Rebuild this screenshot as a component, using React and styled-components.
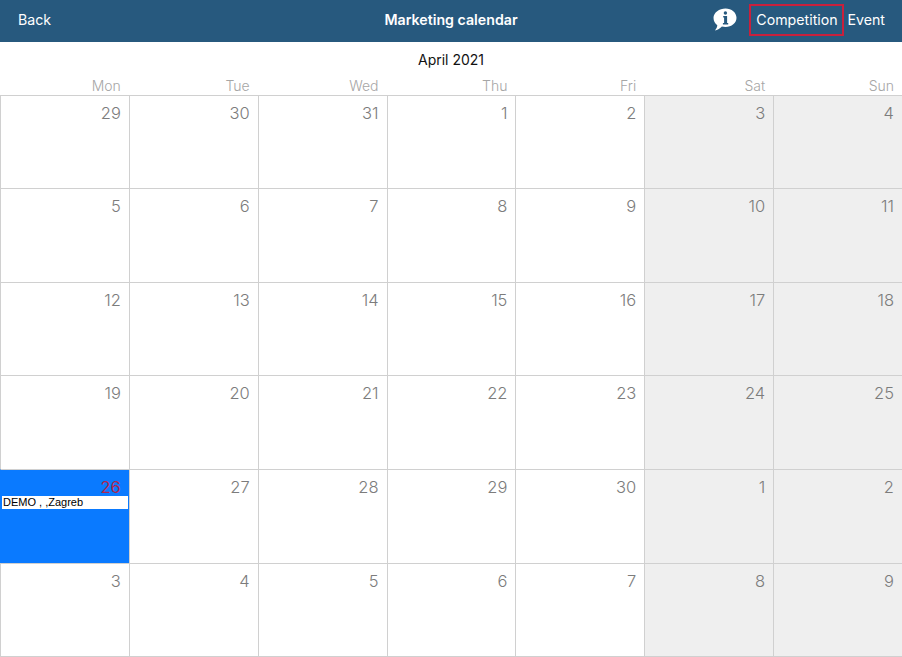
import React from "react";
import styled, { createGlobalStyle } from "styled-components";

const Global = createGlobalStyle`
  html, body { margin: 0; padding: 0; background: #fff; }
  body { font-family: Inter, "Liberation Sans", sans-serif; }
`;
const Page = styled.div`
  width: 902px;
  height: 657px;
  display: flex;
  flex-direction: column;
  overflow: hidden;
`;
const Header = styled.header`
  height: 42px;
  flex: none;
  background: #27597e;
  color: #fff;
  display: grid;
  grid-template-columns: 1fr auto 1fr;
  align-items: center;
  font-size: 14.2px;
  padding-bottom: 3px;
  box-sizing: border-box;
`;
const Back = styled.span`
  padding-left: 18px;
`;
const Title = styled.h1`
  margin: 0;
  font-size: 14.2px;
  font-weight: 600;
`;
const Actions = styled.div`
  display: flex;
  justify-content: flex-end;
  align-items: center;
  padding-right: 17px;
`;
const InfoIcon = styled.svg`
  width: 24px;
  height: 23px;
  margin-right: 12px;
  flex: none;
`;
const HighlightedAction = styled.span`
  box-sizing: border-box;
  width: 95px;
  height: 32px;
  border: 2px solid #c9203c;
  display: flex;
  align-items: center;
  justify-content: center;
  margin-right: 3px;
`;
const Month = styled.div`
  height: 35px;
  flex: none;
  display: flex;
  align-items: center;
  justify-content: center;
  font-size: 14px;
  padding-bottom: 1px;
  box-sizing: border-box;
  color: #111;
`;
const Weekdays = styled.div`
  display: grid;
  grid-template-columns: repeat(7, 1fr);
  height: 17.6px;
  flex: none;
`;
const Weekday = styled.div`
  text-align: right;
  padding-right: 8px;
  font-size: 14px;
  line-height: 17px;
  font-weight: 300;
  color: #a6a6a6;
`;
const Grid = styled.div`
  flex: none;
  box-sizing: border-box;
  height: 562.6px;
  display: grid;
  grid-template-columns: repeat(7, 1fr);
  grid-template-rows: repeat(6, 1fr);
  border-bottom: 1px solid #d0d0d0;
`;
const Cell = styled.div`
  box-sizing: border-box;
  min-width: 0;
  border-top: 1px solid #d0d0d0;
  border-left: 1px solid ${(p) => (p.$today ? "transparent" : "#d0d0d0")};
  background: ${(p) => (p.$today ? "#0a7aff" : p.$weekend ? "#efefef" : "#fff")};
  padding: 7px 1px 0 1px;
`;
const DayNumber = styled.div`
  text-align: right;
  padding-right: 7px;
  font-size: 16.5px;
  line-height: 20px;
  font-weight: ${(p) => (p.$today ? 400 : 300)};
  color: ${(p) => (p.$today ? "#b0264f" : "#7c7c7c")};
`;
const EventTag = styled.div`
  margin-top: -1px;
  height: 13px;
  background: #fff;
  color: #000;
  font-family: "Liberation Sans", sans-serif;
  font-size: 11px;
  line-height: 13px;
  padding-left: 1px;
  white-space: nowrap;
  overflow: hidden;
`;

const days = [
  29, 30, 31, 1, 2, 3, 4, 5, 6, 7, 8, 9, 10, 11, 12, 13, 14, 15, 16, 17, 18, 19, 20, 21, 22, 23,
  24, 25, 26, 27, 28, 29, 30, 1, 2, 3, 4, 5, 6, 7, 8, 9,
];
const names = ["Mon", "Tue", "Wed", "Thu", "Fri", "Sat", "Sun"];

export default function App() {
  return (
    <Page>
      <Global />
      <Header>
        <Back>Back</Back>
        <Title>Marketing calendar</Title>
        <Actions>
          <InfoIcon viewBox="0 0 24 23" aria-hidden="true">
            <path
              fill="#fff"
              d="M12.500 0.500C18.600 0.500 23.500 4.600 23.500 9.800S18.600 19 12.500 19c-1.300 0-2.500-.2-3.600-.5C7.200 20.400 4.800 22 1.800 22.500c1.200-1.200 2.300-3 2.500-5.300C1.900 15.500.5 12.800.5 9.800.5 4.600 6.400.5 12.500.5Z"
            />
            <circle cx="12.400" cy="5" r="1.700" fill="#27597e" />
            <path fill="#27597e" d="M10.200 8h3.900v7h1.100v1.500H9.900V15h1.200V9.500h-.9Z" />
          </InfoIcon>
          <HighlightedAction>Competition</HighlightedAction>
          <span>Event</span>
        </Actions>
      </Header>
      <Month>April 2021</Month>
      <Weekdays>
        {names.map((n) => (
          <Weekday key={n}>{n}</Weekday>
        ))}
      </Weekdays>
      <Grid>
        {days.map((d, i) => {
          const today = i === 28;
          return (
            <Cell key={i} $weekend={i % 7 >= 5} $today={today}>
              <DayNumber $today={today}>{d}</DayNumber>
              {today && <EventTag>DEMO , ,Zagreb</EventTag>}
            </Cell>
          );
        })}
      </Grid>
    </Page>
  );
}
